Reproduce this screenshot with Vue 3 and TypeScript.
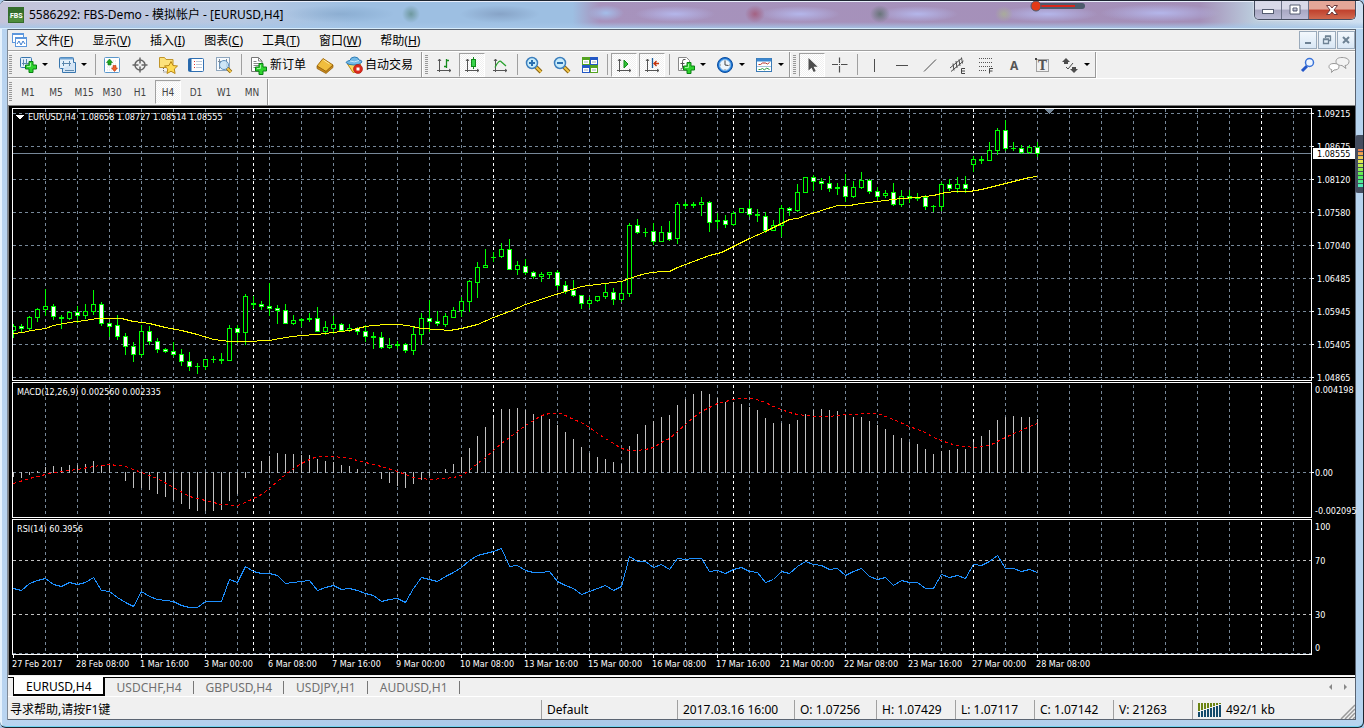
<script setup lang="ts">
import { ref } from 'vue'

type Candle = [high: number, top: number, bottom: number, low: number, bull: 0 | 1]
interface Tool { icon: string; label: string; text?: string; menu?: boolean; on?: boolean }

const STEP = 8
const X0 = 13

const candles: Candle[] = [
  [324,326,331,338,1],[324,326,329,332,0],[316,317,329,331,1],[308,309,318,322,1],[289,306,310,316,1],
  [304,306,317,320,0],[315,317,319,329,0],[311,312,319,320,1],[306,312,316,323,0],[304,311,316,319,1],
  [290,304,312,315,1],[302,304,324,326,0],[322,323,327,337,0],[315,325,337,340,0],[333,336,347,355,0],
  [342,346,355,362,0],[325,331,355,357,1],[326,331,342,345,0],[338,341,350,353,0],[348,349,352,353,0],
  [342,351,355,357,0],[349,354,362,366,0],[352,361,367,371,0],[363,366,367,374,0],[359,359,367,370,1],
  [356,359,360,363,0],[353,359,361,364,0],[325,328,361,361,1],[325,328,333,343,0],[294,296,333,345,1],
  [296,303,305,309,0],[301,304,307,310,0],[283,306,309,316,0],[305,308,311,324,0],[304,310,324,324,0],
  [315,320,324,325,1],[318,319,321,327,0],[313,318,320,322,0],[307,318,332,332,0],[321,327,332,335,1],
  [316,324,329,334,1],[323,324,331,332,0],[324,328,331,332,1],[327,328,332,335,0],[325,331,337,342,0],
  [332,336,338,349,0],[332,337,348,349,0],[338,345,348,349,1],[341,344,346,349,0],[343,344,351,353,0],
  [327,334,351,355,1],[313,318,335,345,1],[300,318,322,332,0],[311,321,324,326,0],[313,316,325,327,1],
  [307,310,318,318,1],[297,301,311,317,1],[280,281,302,312,1],[262,267,283,298,1],[249,265,268,268,1],
  [252,257,258,262,0],[243,249,257,258,1],[239,249,270,270,0],[261,265,270,275,1],[259,266,273,275,0],
  [271,272,277,279,0],[272,274,277,282,1],[272,272,275,279,1],[270,272,286,290,0],[281,285,292,294,0],
  [280,290,296,297,0],[295,295,304,309,0],[297,300,304,308,1],[296,296,301,302,1],[284,292,297,299,1],
  [288,292,300,305,0],[281,293,300,302,1],[223,225,294,297,1],[219,225,233,234,0],[228,232,233,237,0],
  [223,231,242,245,0],[226,232,242,242,1],[221,232,240,241,0],[202,204,239,244,1],[202,204,206,209,0],
  [202,204,206,208,0],[197,202,205,216,1],[201,202,223,232,0],[213,220,222,229,0],[215,220,225,228,0],
  [211,213,225,226,1],[208,208,213,213,1],[200,208,215,217,0],[209,214,216,222,0],[212,216,231,233,0],
  [220,225,231,231,1],[205,208,226,237,1],[207,208,211,216,0],[184,192,211,212,1],[177,177,193,193,1],
  [175,177,182,191,0],[178,181,184,190,0],[176,183,189,192,0],[183,187,189,195,0],[174,186,197,202,0],
  [181,187,197,198,1],[172,180,188,189,1],[179,180,192,194,0],[187,191,197,200,0],[190,193,196,198,1],
  [183,192,205,206,0],[190,196,205,207,1],[190,196,199,203,0],[193,197,199,201,0],[195,197,207,210,0],
  [205,206,207,212,0],[182,184,207,211,1],[179,184,189,191,0],[177,184,189,193,1],[176,184,189,193,0],
  [156,159,165,172,1],[156,159,161,164,0],[142,150,161,161,1],[128,130,151,155,1],[120,130,149,151,0],
  [142,148,149,151,0],[145,148,153,154,0],[145,147,153,154,1],[142,147,154,157,0],
]

const average = '13,333 22,332 31,330 45,328 53,325 69,322 85,320 97,318 121,318 133,321 149,323 165,327 181,330 197,334 213,339 221,340 229,341 245,341 269,340 285,337 301,335 317,334 333,332 349,330 357,328 365,326 373,325 387,324 397,324 407,325 421,328 437,329 449,330 461,328 477,324 493,317 509,311 525,304 549,296 565,291 581,286 597,284 613,282 621,281 632,277 645,273 661,271 669,271 677,267 693,261 709,255 721,252 733,246 749,238 765,231 781,223 789,219 797,218 805,215 821,210 837,205 849,205 861,203 877,201 893,199 901,198 917,197 933,195 945,192 957,191 969,191 981,189 997,185 1013,181 1029,177 1037,176'

const ZERO = 472
const histogram: number[] = [
  476,477,474,471,467,466,467,465,465,464,461,465,464,472,480,487,487,489,493,496,499,503,508,510,510,510,509,500,493,477,472,461,
  456,453,454,454,455,455,459,461,462,465,466,469,472,472,478,482,485,487,483,479,475,472,469,464,457,448,436,427,418,409,409,408,
  410,414,416,419,425,432,439,447,453,457,459,462,464,446,434,425,421,417,415,405,399,394,391,394,398,402,402,404,407,410,418,423,
  423,424,420,414,410,409,410,411,415,417,417,421,425,429,435,438,442,444,449,454,451,450,449,449,442,436,430,420,417,416,417,417,419,
]
const signal = '13,483 29,478 45,474 61,471 77,469 93,466 109,464 125,466 141,472 157,478 173,487 189,496 205,500 221,504 237,505 245,502 253,498 261,494 269,488 277,481 285,474 293,468 301,463 309,459 317,456 333,456 349,458 365,462 381,466 397,471 413,477 429,479 445,478 453,477 461,475 469,470 477,463 485,457 493,450 501,443 509,437 517,431 525,425 533,420 541,415 549,413 561,413 567,416 573,419 581,422 589,427 597,433 605,438 613,443 621,448 629,450 637,450 645,449 653,447 661,442 669,438 677,431 685,424 693,417 701,411 709,407 717,403 725,401 733,399 741,398 753,398 765,402 773,406 781,409 789,412 797,414 805,415 813,416 829,416 837,415 845,414 877,413 885,416 893,419 909,426 925,432 933,437 941,440 949,443 957,445 965,446 973,447 981,446 989,445 997,441 1005,437 1013,433 1021,430 1029,426 1037,423'

const rsiValues: number[] = [
  588,590,583,580,578,584,586,582,584,582,577,590,591,597,602,606,591,596,599,600,601,605,607,607,601,601,601,579,582,566,571,573,
  573,575,583,582,581,580,590,587,585,589,588,590,593,595,601,599,598,602,588,577,579,581,576,572,567,560,555,553,551,548,566,565,
  570,572,572,571,581,585,588,594,591,588,585,590,586,556,561,561,567,564,569,558,559,558,558,571,570,573,569,567,571,572,582,579,
  571,573,566,561,564,565,569,568,575,571,568,576,579,577,585,580,582,582,588,588,574,577,575,578,564,565,561,555,568,568,571,569,572,
]
const rsi = rsiValues.map((y, i) => `${X0 + i * STEP},${y}`).join(' ')

const gridX = Array.from({ length: 60 }, (_, k) => 45 + k * 32)
const days = [253, 493, 733, 973, 1261]
const prices = ['1.09215', '1.08675', '1.08120', '1.07580', '1.07040', '1.06485', '1.05945', '1.05405', '1.04865']
const priceY = (i: number) => 113 + i * 33
const dates = ['27 Feb 2017', '28 Feb 08:00', '1 Mar 16:00', '3 Mar 00:00', '6 Mar 08:00', '7 Mar 16:00', '9 Mar 00:00', '10 Mar 08:00', '13 Mar 16:00', '15 Mar 00:00', '16 Mar 08:00', '17 Mar 16:00', '21 Mar 00:00', '22 Mar 08:00', '23 Mar 16:00', '27 Mar 00:00', '28 Mar 08:00']

const plus = (x: number, y: number) => `<path transform="translate(${x} ${y})" d="M4 .5h4V4h3.500v4H8v3.500H4V8H.5V4H4z" fill="#2ed32e" stroke="#0a7f14"/><path transform="translate(${x} ${y})" d="M5.500 2v3.500H2" fill="none" stroke="#9df59d"/>`
const lens = (sign: string) => `<path d="M12 12l5 5" stroke="#8a6410" stroke-width="4"/><path d="M12 12l5 5" stroke="#f2c64a" stroke-width="2"/><circle cx="8" cy="8" r="5.500" fill="#c8ecfb" stroke="#3d7fbd" stroke-width="1.500"/><path d="${sign}" stroke="#2a6fb0" stroke-width="2" fill="none"/>`
const axes = '<path d="M5.500 4v13M3 15.500h14M4 6l1.500-2L7 6M15 14l2 1.500-2 1.500" stroke="#555" fill="none"/>'

const icons: Record<string, string> = {
  newChart: '<rect x="2.500" y="2.500" width="11" height="10" rx="1" fill="#e3effa" stroke="#3876ae"/><path d="M5.500 4.500v6M4 8.500h7M8.500 4v4" stroke="#5b87ad" fill="none"/>' + plus(7, 6),
  profiles: '<rect x="2.500" y="2.500" width="14" height="11" rx="1" fill="#e3effa" stroke="#3876ae"/><path d="M3 3.500h13" stroke="#6fa4d4" stroke-width="2"/><path d="M16.500 7.500h2v10h-13v-3.500" fill="#d3e4f5" stroke="#3876ae"/><path d="M5 8.500h9M6.500 6v5M12.500 6v5M8 15.500h9" stroke="#5b87ad" fill="none"/>',
  market: '<rect x="2.500" y="2.500" width="15" height="15" rx="1" fill="#fff" stroke="#5a97cc"/><path d="M5 6h10M5 9h10M5 12h10M5 15h10" stroke="#d5dde6" stroke-dasharray="1 1"/><path d="M7.500 4l3 3.500H9V10H6V7.500H4.500z" fill="#1fa522" stroke="#0c7a12" stroke-width=".6"/><path d="M12.500 16.500l-3-3.500H11v-2.500h3V13h1.500z" fill="#f0622a" stroke="#b3360d" stroke-width=".6"/>',
  cross: '<circle cx="10" cy="10" r="5" fill="none" stroke="#666" stroke-width="1.500"/><path d="M10 2.500v6M10 11.500v6M2.500 10h6M11.500 10h6" stroke="#666" stroke-width="1.500"/>',
  navigator: '<path d="M1.500 2.500h5l1.500 2h7v8h-13.500z" fill="#fce27c" stroke="#c1952a"/><path d="M5.500 13v4h3" fill="none" stroke="#666" stroke-dasharray="1 1"/><path d="M13 6.500l2 4 4.500.5-3.200 3 .8 4.500-4.100-2.200L9 18.500l.8-4.500-3.300-3 4.500-.5z" fill="#ffdc55" stroke="#b98716"/>',
  terminal: '<rect x="2.500" y="3.500" width="15" height="13" rx="1" fill="#fff" stroke="#2f6fb2"/><path d="M4 4v12" stroke="#2667aa" stroke-width="3"/><path d="M8 6.500h1M8 9.500h1M8 12.500h1" stroke="#d33"/><path d="M10 6.500h6M10 9.500h6M10 12.500h6" stroke="#bcc9d8"/>',
  tester: '<rect x="2.500" y="2.500" width="13" height="13" fill="#f8fbfe" stroke="#8ea6be"/><path d="M5.500 4v10M4 6.500h3M12.500 4v8" stroke="#7b8b9b"/><path d="M13 13l4 4" stroke="#8a6410" stroke-width="3.500"/><path d="M13 13l4 4" stroke="#f2c64a" stroke-width="2"/><circle cx="10" cy="10" r="4.500" fill="#c6e2f6" fill-opacity=".85" stroke="#5e90bd"/>',
  order: '<path d="M2.500 2.500h7l3.500 3.500v10.500H2.500z" fill="#fff" stroke="#777"/><path d="M9.500 2.500V6H13M4.500 6.500h3M4.500 8.500h6M4.500 10.500h6M4.500 12.500h4" fill="none" stroke="#888"/>' + plus(6, 8),
  editor: '<path d="M8 3.500L18 10l-7 6.500L2 11z" fill="#f0bd3d" stroke="#a8700f"/><path d="M2 11v2.500l9 5 7-6V10l-7 6.500z" fill="#c98a1d" stroke="#8f5c0a" stroke-width=".7"/><path d="M8.500 5l6 4" stroke="#ffe9a0"/>',
  auto: '<path d="M3.500 9h13L14 16.500l-5 1z" fill="#fbd75d" stroke="#bd8b1b"/><path d="M2 7.500q1-2 4-2 .5-3.500 4.500-3.500t4.500 3q3 0 3 2-2 3-8 3t-8-2.500z" fill="#73b9e6" stroke="#2f7db5"/><path d="M6 6q4 2 9-.5" fill="none" stroke="#c7e7fa"/><circle cx="14" cy="14" r="4.500" fill="#dc2a1d" stroke="#a8150c" stroke-width=".6"/><rect x="12.500" y="12.500" width="3" height="3" fill="#fff"/>',
  bars: axes + '<path d="M12.500 4v9M10 11.500h2.500M12.500 5.500H15" stroke="#138a1b" stroke-width="1.300" fill="none"/>',
  candles: axes + '<path d="M11.500 2v12" stroke="#138a1b"/><rect x="9.500" y="4.500" width="4" height="7" fill="#38d34a" stroke="#138a1b"/>',
  line: axes + '<path d="M5 12.500Q9 4 11.500 7l4.500 4" stroke="#2aa12f" stroke-width="1.300" fill="none"/>',
  zoomIn: lens('M5 8h6M8 5v6'),
  zoomOut: lens('M5 8h6'),
  tile: '<rect x="2" y="2" width="8" height="8" fill="#54a322"/><rect x="10" y="2" width="8" height="8" fill="#2358c5"/><rect x="2" y="10" width="8" height="8" fill="#2358c5"/><rect x="10" y="10" width="8" height="8" fill="#54a322"/><path d="M3 5h6v4H3zM11 5h6v4h-6zM3 13h6v4H3zM11 13h6v4h-6z" fill="#fff"/><path d="M4 7h4M12 7h4M4 15h4M12 15h4" stroke="#9dabb9"/>',
  scroll: axes + '<path d="M10 5v8l4-4z" fill="#2fc336" stroke="#138a1b"/>',
  shift: axes + '<path d="M10.500 3v10" stroke="#1f5f9e" stroke-width="1.300"/><path d="M17 8.500h-5M14.500 6L12 8.500l2.500 2.500" stroke="#c4340c" stroke-width="1.400" fill="none"/>',
  indicators: '<path d="M2.500 2.500h8l3 3v10h-11z" fill="#fff" stroke="#888"/><path d="M9.500 4.500q-3-1-3 2v6q0 2-2 1.500M4.500 8.500h4" fill="none" stroke="#555"/>' + plus(7, 7),
  clock: '<circle cx="10" cy="10" r="7.500" fill="#1c76d6" stroke="#0c4d9e"/><circle cx="10" cy="10" r="5.500" fill="#eef5fb" stroke="#7cb6ea"/><path d="M10 6v4l3.500.5" stroke="#444" fill="none"/><path d="M10 5v1M10 14v1M5 10h1M14 10h1" stroke="#888"/>',
  template: '<rect x="2.500" y="3.500" width="15" height="13" fill="#fff" stroke="#3a7ab6"/><path d="M3 5h14" stroke="#3c87d0" stroke-width="3"/><path d="M3 11.500h14" stroke="#a9c4dc"/><path d="M4.500 9.500h2l2-1.500h3l2 1 2-1.500" stroke="#b8372c" fill="none"/><path d="M4.500 14.500h2l2-1 2 1.500 2-2 3 1.500" stroke="#2b9a38" fill="none"/>',
  cursor: '<path d="M6.500 3v12.500l3-2.800 2.200 4.300 2-1-2.100-4.200h4z" fill="#4d4d4d"/>',
  plusLine: '<path d="M9.500 2.500v5.500M9.500 11v6.500M2 9.500h6M11 9.500h6.500" stroke="#4d4d4d" stroke-width="1.200"/><path d="M9 9.500h1" stroke="#4d4d4d"/>',
  vline: '<path d="M10.500 4v13" stroke="#4d4d4d"/>',
  hline: '<path d="M4 10.500h12" stroke="#4d4d4d"/>',
  trend: '<path d="M4 16.500L16 4.500" stroke="#4d4d4d"/>',
  channel: '<path d="M2 13L14 3M3 16.500L15.500 6M5 8.500l1 7M8 6l1 7M11 4.500l1 6.500M13.500 2.500l1 6" stroke="#4d4d4d" fill="none"/><path d="M17 13.500h-3.500v5H17M14 16h3" stroke="#444" fill="none"/>',
  fibo: '<path d="M3 3.500h14M3 7.500h14M3 11.500h14M3 15.500h8" stroke="#555" stroke-dasharray="1 1"/><path d="M13.500 18.500v-5H17M14 16h2.500" stroke="#444" fill="none"/>',
  textA: '<text x="6" y="15" font-size="12" font-weight="bold" fill="#555" font-family="Noto Sans">A</text>',
  textT: '<rect x="4.500" y="4.500" width="12" height="12" fill="none" stroke="#555" stroke-dasharray="1 1"/><rect x="3" y="3" width="2" height="2" fill="#444"/><text x="6" y="15" font-size="12" font-weight="bold" fill="#555" font-family="DejaVu Serif">T</text>',
  shapes: '<path d="M6 3l4 4H8v2H4V7H2zM14 18l-4-4h2v-2h4v2h2z" fill="#4d4d4d"/><path d="M6 12l2 2 5-6" stroke="#4d4d4d" fill="none"/>',
}

const standard: (Tool | null)[] = [
  { icon: 'newChart', label: '新图表', menu: true }, { icon: 'profiles', label: '配置文件', menu: true }, null,
  { icon: 'market', label: '市场报价' }, { icon: 'cross', label: '数据窗口' }, { icon: 'navigator', label: '导航' },
  { icon: 'terminal', label: '终端' }, { icon: 'tester', label: '策略测试' }, null,
  { icon: 'order', label: '新订单', text: '新订单' }, { icon: 'editor', label: 'MetaEditor' }, { icon: 'auto', label: '自动交易', text: '自动交易' },
]
const charts: (Tool | null)[] = [
  { icon: 'bars', label: '柱状图' }, { icon: 'candles', label: '阴阳烛', on: true }, { icon: 'line', label: '折线图' }, null,
  { icon: 'zoomIn', label: '放大' }, { icon: 'zoomOut', label: '缩小' }, { icon: 'tile', label: '平铺' }, null,
  { icon: 'scroll', label: '自动滚动', on: true }, { icon: 'shift', label: '图表平移', on: true }, null,
  { icon: 'indicators', label: '指标', menu: true }, { icon: 'clock', label: '时段', menu: true }, { icon: 'template', label: '模板', menu: true },
]
const studies: (Tool | null)[] = [
  { icon: 'cursor', label: '光标', on: true }, { icon: 'plusLine', label: '十字准线' }, null,
  { icon: 'vline', label: '垂直线' }, { icon: 'hline', label: '水平线' }, { icon: 'trend', label: '趋势线' }, { icon: 'channel', label: '通道' },
  { icon: 'fibo', label: '斐波纳契' }, { icon: 'textA', label: '文字' }, { icon: 'textT', label: '文字标签' }, { icon: 'shapes', label: '箭头', menu: true },
]
const toolbars = [standard, charts, studies]

const menus = [['文件', 'F'], ['显示', 'V'], ['插入', 'I'], ['图表', 'C'], ['工具', 'T'], ['窗口', 'W'], ['帮助', 'H']]
const frames = ['M1', 'M5', 'M15', 'M30', 'H1', 'H4', 'D1', 'W1', 'MN']
const frame = ref('H4')
const tabs = ['EURUSD,H4', 'USDCHF,H4', 'GBPUSD,H4', 'USDJPY,H1', 'AUDUSD,H1']
const tab = ref('EURUSD,H4')
</script>

<template>
  <div class="window">
    <header class="titlebar">
      <svg class="app-icon" width="16" height="16" viewBox="0 0 16 16"><rect width="16" height="16" fill="#356d2c" /><rect x="1" y="9" width="14" height="6" fill="#4f8c3c" /><text x="2" y="11" font-size="7" font-weight="bold" fill="#fff" font-family="Roboto">FBS</text></svg>
      <h1>5586292: FBS-Demo - 模拟帐户 - [EURUSD,H4]</h1>
      <svg class="slider" width="56" height="12" viewBox="0 0 56 12"><rect x="4" y="3" width="51" height="6" rx="3" fill="#4c5a6c" /><rect x="8" y="5" width="37" height="2" fill="#d8261c" /><circle cx="6" cy="6" r="5" fill="#e23a17" stroke="#4c5a6c" /></svg>
      <div class="caption-buttons">
        <button aria-label="最小化"><svg width="14" height="12"><rect x="1.500" y="5.500" width="11" height="4" fill="#fff" stroke="#555c70" /></svg></button>
        <button aria-label="最大化"><svg width="14" height="12"><path d="M2 1h10v9H2zM5 4v3h4V4z" fill="#fff" fill-rule="evenodd" stroke="#555c70" /></svg></button>
        <button class="close" aria-label="关闭"><svg width="14" height="12"><path d="M1.500 1.500h3.500l2 2.500 2-2.500h3.500L9 6l3.500 4.500H9L7 8l-2 2.500H1.500L5 6z" fill="#fff" stroke="#6b3a3c" /></svg></button>
      </div>
    </header>

    <div class="client">
      <nav class="menubar">
        <svg class="doc-icon" width="16" height="16" viewBox="0 0 16 16"><rect x=".5" y="1.500" width="11" height="9" fill="#fff" stroke="#5d97dc" /><path d="M0 2h12" stroke="#5d97dc" stroke-width="2" /><rect x="3.500" y="5.500" width="11" height="9" fill="#fff" stroke="#5d97dc" /><path d="M3 6h12" stroke="#5d97dc" stroke-width="2" /><path d="M5 12l2-3 2 4 2-4 2 3" fill="none" stroke="#3f7fd0" /></svg>
        <button v-for="m in menus" :key="m[1]" class="menu">{{ m[0] }}(<u>{{ m[1] }}</u>)</button>
        <div class="mdi-buttons">
          <button aria-label="最小化图表"><svg width="12" height="12"><rect x="3" y="8" width="6" height="2" fill="#6e8294" /></svg></button>
          <button aria-label="还原图表"><svg width="12" height="12"><path d="M4.500 4V2.500h5v4H8M4 2h6M2.500 5.500h5v4h-5zM2 5h6" fill="none" stroke="#6e8294" stroke-width="1.300" /></svg></button>
          <button aria-label="关闭图表"><svg width="12" height="12"><path d="M3 3l6 6M9 3L3 9" stroke="#6e8294" stroke-width="2" /></svg></button>
        </div>
      </nav>

      <div class="toolrow">
        <div v-for="(bar, b) in toolbars" :key="b" class="toolbar" role="toolbar">
          <i class="grip"></i>
          <template v-for="(t, i) in bar" :key="i">
            <i v-if="!t" class="sep"></i>
            <button v-else class="tool" :class="{ on: t.on, drop: t.menu, wide: t.text }" :aria-label="t.label">
              <svg width="20" height="20" viewBox="0 0 20 20" v-html="icons[t.icon]"></svg>
              <span v-if="t.text">{{ t.text }}</span>
              <i v-if="t.menu" class="arrow"></i>
            </button>
          </template>
        </div>
        <div class="right-tools">
          <button aria-label="搜索"><svg width="16" height="16" viewBox="0 0 16 16"><path d="M2 14l5-5" stroke="#2457c9" stroke-width="3" /><circle cx="9.500" cy="5.500" r="4" fill="#eef5ff" stroke="#3a73d8" stroke-width="1.500" /></svg></button>
          <button aria-label="聊天"><svg width="22" height="18" viewBox="0 0 22 18"><path d="M14 1.500c4 0 7 1.500 7 4s-2 4-4 4l1 3-4-3c-4 0-6-1.500-6-4s2-4 6-4z" fill="#f3f3f3" stroke="#999" /><path d="M6 7.500c3.500 0 5 1.200 5 3.300s-2 3.200-5 3.200l-2.500 2.500.3-2.800C2 13 1 12.300 1 10.800c0-2.100 1.500-3.300 5-3.300z" fill="#fff" stroke="#999" /></svg></button>
        </div>
      </div>

      <div class="framerow">
        <div class="toolbar frames" role="toolbar">
          <i class="grip"></i>
          <button v-for="f in frames" :key="f" class="tool" :class="{ on: f === frame }" @click="frame = f">{{ f }}</button>
        </div>
      </div>

      <main class="chart">
        <section class="panel price">
          <svg class="plot" shape-rendering="crispEdges">
            <g transform="translate(-13 -109)">
              <g class="grid">
                <line v-for="x in gridX" :key="x" :x1="x + 0.5" :x2="x + 0.5" y1="109" y2="1200" />
                <line v-for="(p, i) in prices" :key="p" x1="13" x2="3000" :y1="priceY(i) + 0.5" :y2="priceY(i) + 0.5" />
              </g>
              <line v-for="x in days" :key="x" class="day" :x1="x + 0.5" :x2="x + 0.5" y1="109" y2="1200" />
              <rect x="13" y="153" width="3000" height="1" fill="#778899" />
              <g v-for="(c, i) in candles" :key="i">
                <rect :x="X0 + i * STEP" :y="c[0]" width="1" :height="c[3] - c[0]" fill="#0f0" />
                <rect :x="X0 + i * STEP - 2" :y="c[1]" width="5" :height="c[2] - c[1]" fill="#0f0" />
                <rect v-if="c[2] - c[1] > 2" :x="X0 + i * STEP - 1" :y="c[1] + 1" width="3" :height="c[2] - c[1] - 2" :fill="c[4] ? '#000' : '#fff'" />
              </g>
              <polyline :points="average" transform="translate(.5 .5)" fill="none" stroke="#ff0" />
              <path d="M1044 109h11l-5.500 5z" fill="#778899" />
              <path d="M15 115h9l-4.500 4.500z" fill="#fff" />
              <text x="28" y="120">EURUSD,H4&nbsp; 1.08658 1.08727 1.08514 1.08555</text>
            </g>
          </svg>
          <svg class="scale">
            <g transform="translate(-1312 -108)">
              <g v-for="(p, i) in prices" :key="p"><rect x="1312" :y="priceY(i)" width="2" height="1" fill="#fff" /><text x="1317" :y="priceY(i) + 4">{{ p }}</text></g>
              <rect x="1313" y="148" width="42" height="11" fill="#fff" /><text class="current" x="1317" y="157">1.08555</text>
            </g>
          </svg>
        </section>

        <section class="panel macd">
          <svg class="plot" shape-rendering="crispEdges">
            <g transform="translate(-13 -383)">
              <g class="grid">
                <line v-for="x in gridX" :key="x" :x1="x + 0.5" :x2="x + 0.5" y1="385" y2="517" />
                <line x1="13" x2="3000" y1="472.5" y2="472.5" />
              </g>
              <line v-for="x in days" :key="x" class="day" :x1="x + 0.5" :x2="x + 0.5" y1="385" y2="517" />
              <rect v-for="(y, i) in histogram" :key="i" :x="X0 + i * STEP" :y="Math.min(y, ZERO)" width="1" :height="Math.abs(y - ZERO) + 1" fill="#c0c0c0" />
              <polyline :points="signal" transform="translate(.5 .5)" fill="none" stroke="#f00" stroke-dasharray="3 3" />
              <text x="17" y="395">MACD(12,26,9) 0.002560 0.002335</text>
            </g>
          </svg>
          <svg class="scale">
            <g transform="translate(-1312 -382)"><text x="1315" y="393">0.004198</text><text x="1315" y="476">0.00</text><text x="1315" y="514">-0.002095</text><rect x="1312" y="472" width="2" height="1" fill="#fff" /></g>
          </svg>
        </section>

        <section class="panel rsi">
          <svg class="plot" shape-rendering="crispEdges">
            <g transform="translate(-13 -520)">
              <g class="grid">
                <line v-for="x in gridX" :key="x" :x1="x + 0.5" :x2="x + 0.5" y1="522" y2="654" />
                <line x1="13" x2="3000" y1="653.5" y2="653.5" />
              </g>
              <line v-for="x in days" :key="x" class="day" :x1="x + 0.5" :x2="x + 0.5" y1="522" y2="654" />
              <path class="level" d="M13 560.5H3000M13 614.5H3000" />
              <polyline :points="rsi" transform="translate(.5 .5)" fill="none" stroke="#1e90ff" />
              <text x="17" y="532">RSI(14) 60.3956</text>
            </g>
          </svg>
          <svg class="scale">
            <g transform="translate(-1312 -519)"><text x="1315" y="530">100</text><text x="1315" y="564">70</text><text x="1315" y="618">30</text><text x="1315" y="651">0</text></g>
          </svg>
        </section>

        <svg class="dates">
          <g v-for="(d, i) in dates" :key="d"><rect :x="1 + i * 64" y="0" width="1" height="3" fill="#fff" /><text :x="i * 64" y="12">{{ d }}</text></g>
        </svg>
      </main>

      <nav class="tabs">
        <button v-for="t in tabs" :key="t" class="tab" :class="{ active: t === tab }" @click="tab = t">{{ t }}</button>
        <div class="tab-scroll"><button aria-label="向左"><i class="left"></i></button><button aria-label="向右"><i class="right"></i></button></div>
      </nav>

      <footer class="status">
        <span class="help">寻求帮助,请按F1键</span>
        <span class="profile">Default</span>
        <span class="time">2017.03.16 16:00</span>
        <span class="quote open">O: 1.07256</span>
        <span class="quote">H: 1.07429</span>
        <span class="quote low">L: 1.07117</span>
        <span class="quote">C: 1.07142</span>
        <span class="quote low">V: 21263</span>
        <span class="traffic">
          <svg width="24" height="14" viewBox="0 0 24 14" shape-rendering="crispEdges"><g v-for="k in 8" :key="k"><rect :x="k * 3 - 3" y="0" width="2" :height="9 - k" fill="#6b8413" /><rect :x="k * 3 - 3" :y="10 - k" width="2" :height="4 + k" fill="#134a6b" /></g></svg>
          492/1 kb
        </span>
        <svg class="resize" width="16" height="16"><path d="M2 16L16 2M6 16L16 6M10 16l6-6M14 16l2-2" stroke="#999" stroke-width="1.500" /></svg>
      </footer>
    </div>

    <svg class="meter" width="8" height="58" viewBox="0 0 8 58"><rect width="12" height="58" rx="3" fill="#454d5f" /><rect v-for="k in 19" :key="k" x="3" :y="12 + k * 2" width="5" height="2" :fill="`hsl(${10 + k * 8}, 80%, 62%)`" /><path d="M3 9.500h5M3 12.500h5M3 16.500h5M3 20.500h5M3 24.500h5M3 28.500h5M3 32.500h5M3 36.500h5M3 40.500h5M3 44.500h5M3 48.500h5" stroke="#454d5f" /></svg>
  </div>
</template>

<style>
html, body { margin: 0; background: #a9c8e8; }
</style>

<style scoped>
* { box-sizing: border-box; }
.window {
  position: relative; display: flex; flex-direction: column; height: 100vh; overflow: hidden;
  padding: 0 7px 7px 8px;
  font: 12px/16px "Noto Sans", "Noto Sans CJK SC", sans-serif; color: #000;
  background: linear-gradient(90deg, #b9d4f0, #a9c8e8 40%, #b7d4ef);
  border: solid #1d2530; border-width: 1px 1px 1px 0; border-radius: 6px;
  box-shadow: inset 2px 1px #e6f2fd, inset 0 -1px #73d3f1;
}
button { border: 0; padding: 0; margin: 0; background: none; font: inherit; color: inherit; }
svg { display: block; flex: none; }

.titlebar {
  display: flex; align-items: center; height: 28px; flex: none; margin: 0 -7px 0 -8px; padding-left: 8px; gap: 5px;
  box-shadow: inset 0 1px #e8eefb, inset 0 -1px #d7ecfb;
  background:
    radial-gradient(ellipse 9px 9px at 411px 13px, #4f7f7299, transparent),
    radial-gradient(ellipse 55px 9px at 340px 13px, #6f93b966, transparent),
    radial-gradient(ellipse 40px 9px at 500px 13px, #6e84a877, transparent),
    radial-gradient(ellipse 18px 8px at 606px 12px, #a4bde9, transparent),
    radial-gradient(ellipse 40px 8px at 675px 13px, #b4b6ea, transparent),
    radial-gradient(ellipse 10px 9px at 755px 13px, #a34a66aa, transparent),
    radial-gradient(ellipse 40px 8px at 800px 13px, #b4b6ea, transparent),
    radial-gradient(ellipse 10px 9px at 880px 13px, #5a6e6acc, transparent),
    radial-gradient(ellipse 40px 8px at 918px 13px, #b4b6ea, transparent),
    radial-gradient(ellipse 9px 8px at 1004px 13px, #a9ab9b, transparent),
    radial-gradient(ellipse 50px 8px at 1048px 13px, #b4b6ea, transparent),
    radial-gradient(ellipse 60px 9px at 1160px 12px, #b4b6ea, transparent),
    linear-gradient(#fff0 75%, #a5c6e8),
    linear-gradient(90deg, #c5c4da, #b6c8e2 18%, #9dbfe2 26%, #9dbfe2 42%, #a793bd 44%, #a48fb8 88%, #bcd 92%, #cfe0f2);
}
.titlebar h1 { margin: 0; font: inherit; flex: 1; }
.slider { position: absolute; left: 1030px; top: -1px; }
.caption-buttons { align-self: flex-start; display: flex; margin-right: 7px; border: 1px solid #454d60; border-top: 0; border-radius: 0 0 5px 5px; overflow: hidden; box-shadow: 0 0 2px #fff; }
.caption-buttons button { display: grid; place-items: center; width: 27px; height: 18px; border-right: 1px solid #6b7287; background: linear-gradient(#d8d9e8 45%, #a8a7c2 50%, #bbbcd6); }
.caption-buttons .close { width: 46px; border: 0; background: linear-gradient(#e4a798 45%, #c0402c 50%, #d06a50); }

.client { flex: 1; min-height: 0; display: flex; flex-direction: column; background: #f0f0f0; border: 1px solid #5a6472; border-width: 1px 1px 1px 0; box-shadow: -1px 0 #7f8a97; }
.menubar { display: flex; align-items: center; height: 21px; flex: none; padding-left: 4px; border-bottom: 1px solid #a0a0a0; }
.doc-icon { margin-right: 8px; }
.menu { margin-right: 19px; padding-top: 1px; white-space: nowrap; }
.mdi-buttons { display: flex; gap: 1px; margin-left: auto; }
.mdi-buttons button { display: grid; place-items: center; width: 18px; height: 18px; border: 1px solid #9aaabb; background: linear-gradient(#f3f8fd, #d9e7f5); }

.toolrow { display: flex; height: 27px; flex: none; border-top: 1px solid #fff; }
.toolbar { display: flex; align-items: center; height: 26px; border-right: 1px solid #999; border-bottom: 1px solid #999; box-shadow: 1px 1px #fff; padding-right: 0; }
.grip { width: 3px; height: 20px; margin: 0 2px 0 3px; background: repeating-linear-gradient(#999 0 1px, #f0f0f0 1px 2px); }
.toolbar:first-child { padding-right: 3px; }
.toolbar:first-child .grip { margin-left: 1px; }
.sep { width: 6px; height: 21px; background: linear-gradient(90deg, transparent 3px, #a0a0a0 3px 4px, transparent 4px); }
.tool { position: relative; width: 28px; height: 24px; display: flex; align-items: center; justify-content: center; }
.tool.drop { width: 39px; justify-content: flex-start; padding-left: 4px; gap: 4px; }
.tool.wide { width: auto; justify-content: flex-start; padding: 0 5px; gap: 1px; white-space: nowrap; }
.arrow { border: 3px solid transparent; border-top-color: #000; border-bottom: 0; }
.tool.on { background: repeating-conic-gradient(#fff 0 25%, #f0f0f0 0 50%) 0 0 / 2px 2px content-box, #f0f0f0; border: 1px solid #a0a0a0; border-right-color: #fff; border-bottom-color: #fff; width: 26px; margin: 0 1px; }
.right-tools { margin-left: auto; display: flex; align-items: center; gap: 12px; padding-right: 5px; }
.framerow { height: 27px; flex: none; border-top: 1px solid #fff; }
.frames { width: 260px; border-bottom: 0; color: #444; font: 10px/14px "DejaVu Sans Condensed", "Noto Sans", sans-serif; }
.frames .tool { padding-top: 1px; }
.frames.toolbar:first-child { padding-right: 0; }

.chart { flex: 1; min-height: 0; display: flex; flex-direction: column; gap: 1px; background: #000; border: solid #808080; border-width: 1px 0 0 1px; padding: 2px 0 0 3px; }
.panel { display: flex; flex: none; height: 136px; }
.panel.price { flex: 1; min-height: 0; }
.plot { flex: 1; min-width: 0; height: 100%; border: 1px solid #fff; }
.scale { width: 43px; height: 100%; overflow: visible; }
.chart text { font: 9px "DejaVu Sans Condensed", "Noto Sans", sans-serif; fill: #fff; }
.chart text.current { fill: #000; }
.grid line { stroke: #778899; stroke-dasharray: 3 3; }
.day { stroke: #fff; stroke-dasharray: 3 3; }
.level { stroke: #c0c0c0; stroke-dasharray: 3 3; }
.dates { width: 100%; height: 20px; margin-top: -1px; }

.tabs { display: flex; height: 20px; flex: none; margin-top: 2px; padding-left: 5px; border-top: 1px solid #000; border-bottom: 1px solid #fff; color: #707070; box-shadow: 0 -1px #fff; }
.tab { position: relative; height: 18px; padding: 2px 12px 0; }
.tab:not(.active)::after { content: ""; position: absolute; right: 0; top: 3px; height: 13px; border-right: 1px solid #777; }
.tab.active { height: 19px; margin-top: -1px; padding: 2px 11px 0 12px; color: #000; background: #fff; border: solid #000; border-width: 0 2px 2px 1px; }
.tab-scroll { margin-left: auto; display: flex; gap: 12px; padding-right: 8px; }
.left, .right { display: block; border: 3px solid transparent; }
.left { border-right-color: #888; border-left: 0; }
.right { border-left-color: #888; border-right: 0; }

.status { position: relative; display: flex; align-items: flex-end; height: 22px; flex: none; padding-left: 2px; white-space: nowrap; }
.status span { height: 19px; line-height: 19px; }
.status span + span { border-left: 1px solid #a0a0a0; padding-left: 5px; flex: none; }
.help { flex: 1; }
.profile { width: 136px; }
.time { width: 117px; }
.quote { width: 79px; }
.quote.open { width: 82px; }
.traffic { width: 163px; display: flex; align-items: center; gap: 4px; }
.resize { position: absolute; right: 0; bottom: 0; }
.meter { position: absolute; right: 0; top: 134px; }
</style>
